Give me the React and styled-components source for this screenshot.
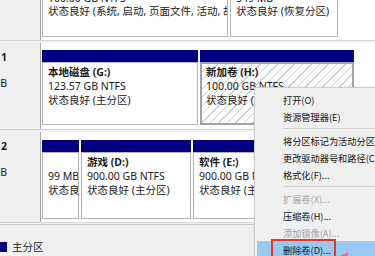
import styled, { createGlobalStyle } from 'styled-components'

const GlobalStyle = createGlobalStyle`
  body {
    margin: 0;
    font-family: "Noto Sans", "Noto Sans CJK SC", sans-serif;
  }
`

const Screen = styled.div`
  position: relative;
  width: 375px;
  height: 256px;
  overflow: hidden;
  background: #f0f0f0;
  font-size: 10.5px;
  color: #1a1a1a;
`

const Disks = styled.div`
  display: flex;
  flex-direction: column;
  gap: 2px;
`

const DiskRow = styled.div`
  display: flex;
  height: ${(p) => p.h}px;
  border-bottom: 1px solid #d4d4d4;
`

const LabelCol = styled.div`
  width: 41px;
  flex-shrink: 0;
  box-sizing: border-box;
  border-right: 1px solid #a8a8a8;
  background: #f0f0f0;
  overflow: hidden;
  display: flex;
  flex-direction: column;
  align-items: flex-end;
  padding: 8px 33px 0 0;
  line-height: 13px;
  white-space: nowrap;
`

const LabelLine = styled.div`
  font-weight: ${(p) => (p.bold ? 'bold' : 'normal')};
  height: 13px;
`

const PartArea = styled.div`
  flex: 1;
  display: flex;
  gap: 2px;
  padding: ${(p) => p.pt}px 0 ${(p) => p.pb}px 1px;
  background: #fff;
  overflow: hidden;
  align-items: ${(p) => (p.clipTop ? 'flex-end' : 'stretch')};
`

const Partition = styled.div`
  width: ${(p) => p.w}px;
  flex-shrink: 0;
  display: flex;
  flex-direction: column;
`

const Bar = styled.div`
  height: 12px;
  background: #000080;
`

const Box = styled.div`
  flex: 1;
  box-sizing: border-box;
  border: ${(p) => (p.selected ? '2px solid #a4a4a4' : '1px solid #b4b4b4')};
  padding: ${(p) => (p.selected ? '2px 4px' : '3px 5px')};
  padding-bottom: ${(p) => p.pb || 0}px;
  background: ${(p) =>
    p.selected
      ? 'repeating-linear-gradient(135deg, #ffffff 0px, #ffffff 5px, #cfcfcf 5px, #cfcfcf 6px)'
      : '#fff'};
  line-height: 13.75px;
  white-space: nowrap;
  overflow: hidden;
`

const Name = styled.div`
  font-weight: bold;
  height: 13.75px;
`

const Line = styled.div`
  height: 13.75px;
`

const Legend = styled.div`
  display: flex;
  align-items: center;
  gap: 5px;
  padding-top: 14px;
  border-top: 1px solid #c8c8c8;
  margin-top: 1px;
`

const Swatch = styled.span`
  width: 7px;
  height: 10px;
  background: #000080;
`

const Menu = styled.div`
  position: absolute;
  left: 254px;
  top: 87px;
  width: 130px;
  height: 180px;
  box-sizing: border-box;
  background: #f0f0f0;
  border: 1px solid #cdcdcd;
  box-shadow: 2px 2px 4px rgba(0, 0, 0, 0.25);
  padding: 3px 2px;
  font-family: "Noto Sans CJK SC", sans-serif;
  font-size: 9.2px;
`

const MenuItem = styled.div`
  height: 17px;
  display: flex;
  align-items: center;
  padding-left: 26px;
  white-space: nowrap;
  color: ${(p) => (p.disabled ? '#a3a3a3' : '#111')};
  background: ${(p) => (p.active ? '#99c9f2' : 'transparent')};
`

const Separator = styled.div`
  height: 1px;
  margin: 3px 0 3px 26px;
  background: #d2d2d2;
`

const RedFrame = styled.span`
  border: 2px solid #e3372f;
  padding: 2px 3px 5px 10px;
  margin-left: -12px;
  margin-top: 3px;
`

const Pointer = styled.svg`
  position: absolute;
  left: 339px;
  top: 250px;
`

function Part({ w, name, size, status, selected, bar = true, pb }) {
  return (
    <Partition w={w}>
      {bar && <Bar />}
      <Box selected={selected} pb={pb}>
        <Name>{name}</Name>
        <Line>{size}</Line>
        <Line>{status}</Line>
      </Box>
    </Partition>
  )
}

export default function App() {
  return (
    <>
      <GlobalStyle />
      <Screen>
        <Disks>
          <DiskRow h={40}>
            <LabelCol />
            <PartArea pt={0} pb={3} clipTop>
              <Part w={186} bar={false} pb={17} name="" size="100.00 GB NTFS" status="状态良好 (系统, 启动, 页面文件, 活动, 故障转储, 主分区)" />
              <Part w={108} bar={false} pb={17} name="" size="549 MB" status="状态良好 (恢复分区)" />
            </PartArea>
          </DiskRow>
          <DiskRow h={86}>
            <LabelCol>
              <LabelLine bold>磁盘 1</LabelLine>
              <LabelLine />
              <LabelLine>223.57 GB</LabelLine>
            </LabelCol>
            <PartArea pt={7} pb={4}>
              <Part w={156} name="本地磁盘  (G:)" size="123.57 GB NTFS" status="状态良好 (主分区)" />
              <Part w={154} selected name="新加卷  (H:)" size="100.00 GB NTFS" status="状态良好 (主分区)" />
            </PartArea>
          </DiskRow>
          <DiskRow h={90}>
            <LabelCol>
              <LabelLine bold>磁盘 2</LabelLine>
              <LabelLine />
              <LabelLine>931.39 GB</LabelLine>
            </LabelCol>
            <PartArea pt={8} pb={3}>
              <Part w={37} name="" size="99 MB" status="状态良好 (EFI 系统分区)" />
              <Part w={110} name="游戏  (D:)" size="900.00 GB NTFS" status="状态良好 (主分区)" />
              <Part w={180} name="软件  (E:)" size="900.00 GB NTFS" status="状态良好 (主分区)" />
            </PartArea>
          </DiskRow>
        </Disks>
        <Legend>
          <Swatch />
          <span>主分区</span>
        </Legend>
        <Menu>
          <MenuItem>打开(O)</MenuItem>
          <MenuItem>资源管理器(E)</MenuItem>
          <Separator />
          <MenuItem>将分区标记为活动分区(M)</MenuItem>
          <MenuItem>更改驱动器号和路径(C)...</MenuItem>
          <MenuItem>格式化(F)...</MenuItem>
          <Separator />
          <MenuItem disabled>扩展卷(X)...</MenuItem>
          <MenuItem>压缩卷(H)...</MenuItem>
          <MenuItem disabled>添加镜像(A)...</MenuItem>
          <MenuItem active>
            <RedFrame>删除卷(D)...</RedFrame>
          </MenuItem>
        </Menu>
        <Pointer width="14" height="8" viewBox="0 0 14 8">
          <path d="M1 6 L9 2 L9 8 Z" fill="#ef6f8c" />
        </Pointer>
      </Screen>
    </>
  )
}
